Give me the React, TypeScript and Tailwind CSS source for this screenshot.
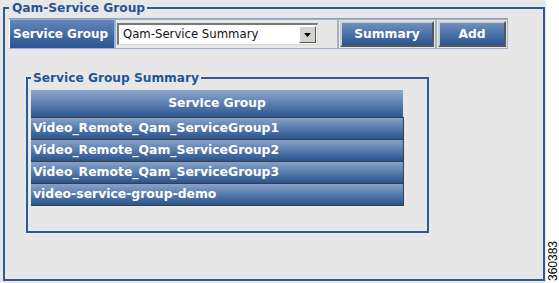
const groups = [
  "Video_Remote_Qam_ServiceGroup1",
  "Video_Remote_Qam_ServiceGroup2",
  "Video_Remote_Qam_ServiceGroup3",
  "video-service-group-demo",
];

const font = "font-['DejaVu_Sans',Verdana,sans-serif]";

const App = () => {
  return (
    <div className={`flex h-[283px] w-[559px] bg-white ${font}`}>
      <div className="h-[283px] w-[546px] bg-[#e7e7e7] pl-[3px]">
        <fieldset className="h-[281px] w-[542px] border-2 border-[#2f5a94] pl-[4px]">
          <legend className="pl-[3px] pr-[2px] text-[12.2px] font-bold leading-[16px] text-[#1f5597]">
            Qam-Service Group
          </legend>

          {/* toolbar */}
          <div className="mt-[2px] flex w-[499px] border-t border-[#8aa0c0]">
            <div className="border border-[#9fb2cc] border-l-0 p-0">
              <div className="flex h-[28px] w-[105px] items-center border-l border-white bg-linear-to-b from-[#6386b8] to-[#2a5592] pl-[3px] text-[12px] font-bold text-white">
                Service Group
              </div>
            </div>
            <div className="flex h-[30px] w-[225px] items-center border border-[#9fb2cc] pl-[1px]">
              <div className="flex h-[22px] w-[201px] items-center border-t-2 border-l-2 border-t-[#7a7a7a] border-l-[#7a7a7a] border-b border-r border-b-[#d8d8d8] border-r-[#d8d8d8] bg-white pl-[4px]">
                <span className="flex-1 text-[11.7px] text-[#111]">Qam-Service Summary</span>
                <div className="mr-[1px] flex h-[17px] w-[17px] items-center justify-center border border-t-white border-l-white border-b-[#555] border-r-[#555] bg-[#d6d3ce]">
                  <svg width="7" height="4" viewBox="0 0 7 4">
                    <path d="M0 0h7L3.5 4z" fill="#000" />
                  </svg>
                </div>
              </div>
            </div>
            <div className="border border-[#9fb2cc] p-[1px]">
              <button className="flex h-[26px] w-[94px] items-center justify-center border-2 border-t-[#cfcfcf] border-l-[#cfcfcf] border-b-[#555] border-r-[#555] bg-linear-to-b from-[#6f90be] to-[#2a5592] text-[12.3px] font-bold text-white">
                Summary
              </button>
            </div>
            <div className="border border-[#9fb2cc] p-[1px]">
              <button className="flex h-[26px] w-[68px] items-center justify-center border-2 border-t-[#cfcfcf] border-l-[#cfcfcf] border-b-[#555] border-r-[#555] bg-linear-to-b from-[#6f90be] to-[#2a5592] text-[12.3px] font-bold text-white">
                Add
              </button>
            </div>
          </div>

          {/* summary */}
          <fieldset className="ml-[17px] mt-[21px] h-[163px] w-[403px] border-2 border-[#2f5a94] pl-[3px]">
            <legend className="pl-[2px] pr-[2px] text-[12.2px] font-bold leading-[16px] text-[#1f5597]">
              Service Group Summary
            </legend>
            <div className="mt-[4px] w-[373px]">
              <div className="flex h-[27px] w-[372px] items-center justify-center bg-linear-to-b from-[#8ea7cb] to-[#2b5793] text-[12.3px] font-bold text-white">
                Service Group
              </div>
              <div className="border-r border-b border-[#3e3e3e]">
                {groups.map((g, i) => (
                  <div
                    key={i}
                    className="flex h-[22px] items-center border-t border-[#3e3e3e] bg-linear-to-b from-[#87a2c8] to-[#28548f] pl-[2px] text-[12.4px] font-bold text-white"
                  >
                    {g}
                  </div>
                ))}
              </div>
            </div>
          </fieldset>
        </fieldset>
      </div>
      <div className="flex flex-1 items-end justify-center pb-[2px]">
        <span className="rotate-180 text-[12px] leading-[12px] text-black [writing-mode:vertical-rl] font-['Liberation_Sans',Arial,sans-serif]">
          360383
        </span>
      </div>
    </div>
  );
};

export default App;
